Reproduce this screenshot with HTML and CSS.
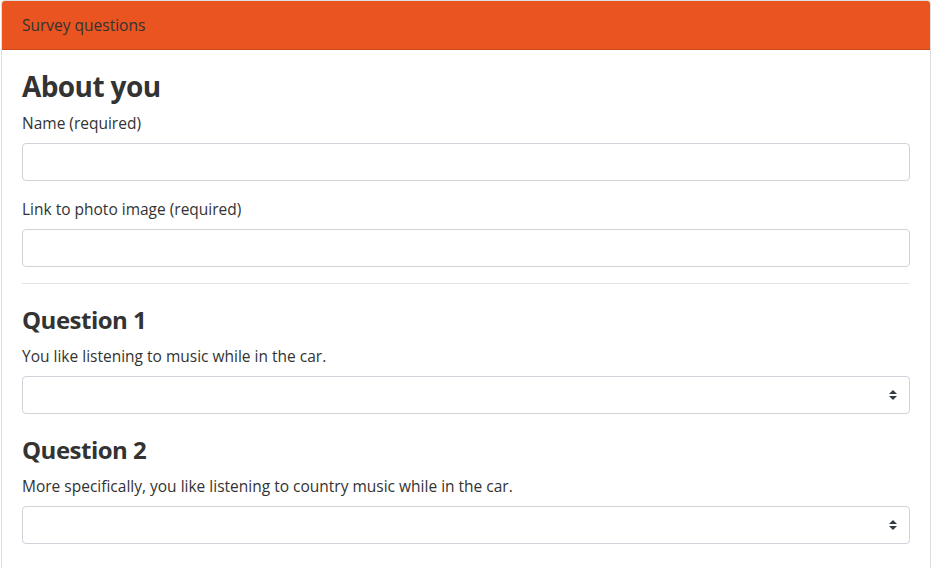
FILE: index.html
```html
<!DOCTYPE html>
<html lang="en">
<head>
<meta charset="utf-8">
<title>Survey</title>
<link rel="stylesheet" href="styles.css">
</head>
<body>
<div class="card">
  <div class="card-header">Survey questions</div>
  <div class="card-body">
    <form>
      <h3 class="section-title">About you</h3>
      <div class="form-group">
        <label class="field-label" for="name">Name (required)</label>
        <input class="form-control" id="name" type="text">
      </div>
      <div class="form-group">
        <label class="field-label" for="photo">Link to photo image (required)</label>
        <input class="form-control" id="photo" type="text">
      </div>
      <hr class="divider">
      <fieldset class="question">
        <legend class="question-title">Question 1</legend>
        <div class="form-group">
          <label class="field-label" for="q1">You like listening to music while in the car.</label>
          <div class="select-wrap">
            <select class="custom-select" id="q1"><option value=""></option></select>
            <svg class="select-arrow" width="8" height="10" viewBox="0 0 4 5" aria-hidden="true"><path d="M2 0L0 2h4zm0 5L0 3h4z" fill="#343a40"/></svg>
          </div>
        </div>
      </fieldset>
      <fieldset class="question">
        <legend class="question-title">Question 2</legend>
        <div class="form-group">
          <label class="field-label" for="q2">More specifically, you like listening to country music while in the car.</label>
          <div class="select-wrap">
            <select class="custom-select" id="q2"><option value=""></option></select>
            <svg class="select-arrow" width="8" height="10" viewBox="0 0 4 5" aria-hidden="true"><path d="M2 0L0 2h4zm0 5L0 3h4z" fill="#343a40"/></svg>
          </div>
        </div>
      </fieldset>
    </form>
  </div>
</div>
</body>
</html>
```
FILE: styles.css
```css
* { box-sizing: border-box; }
html, body { margin: 0; padding: 0; background: #fff; }
body {
  font-family: "Open Sans", "Noto Sans", sans-serif;
  font-size: 16px;
  line-height: 1.5;
  color: #333;
}
.card {
  margin: 0 1px;
  min-height: 600px;
  border: 1px solid rgba(0,0,0,.125);
  border-radius: 4px;
  background: #fff;
}
.card-header {
  background: #e95420;
  color: #333;
  padding: 12px 20px;
  line-height: 24px;
  font-size: 15.5px;
  border-bottom: 1px solid rgba(0,0,0,.125);
  border-radius: 3px 3px 0 0;
}
.card-body { padding: 20px; }
form { margin: 0; }
.section-title {
  margin: 0 0 8px;
  font-size: 28px;
  line-height: 33px;
  font-weight: 700;
  letter-spacing: -0.6px;
}
.form-group { margin-bottom: 16px; }
.field-label {
  display: inline-block;
  margin-bottom: 8px;
  font-size: 15.5px;
  line-height: 24px;
}
.form-control, .custom-select {
  display: block;
  width: 100%;
  height: 38px;
  padding: 6px 12px;
  font: inherit;
  color: #495057;
  background: #fff;
  border: 1px solid #ced4da;
  border-radius: 4px;
  outline: none;
}
.custom-select {
  -webkit-appearance: none;
  appearance: none;
  padding-right: 28px;
}
.select-wrap { position: relative; }
.select-arrow {
  position: absolute;
  right: 13px;
  top: 14px;
  pointer-events: none;
}
.divider {
  margin: 16px 0;
  border: 0;
  border-top: 1px solid rgba(0,0,0,.1);
  height: 0;
}
.question {
  margin: 0;
  padding: 0;
  border: 0;
  min-width: 0;
}
.question-title {
  display: block;
  padding: 3px 0 0;
  margin: 0 0 8px;
  font-size: 24px;
  line-height: 33px;
  font-weight: 700;
  letter-spacing: -0.5px;
}
```
